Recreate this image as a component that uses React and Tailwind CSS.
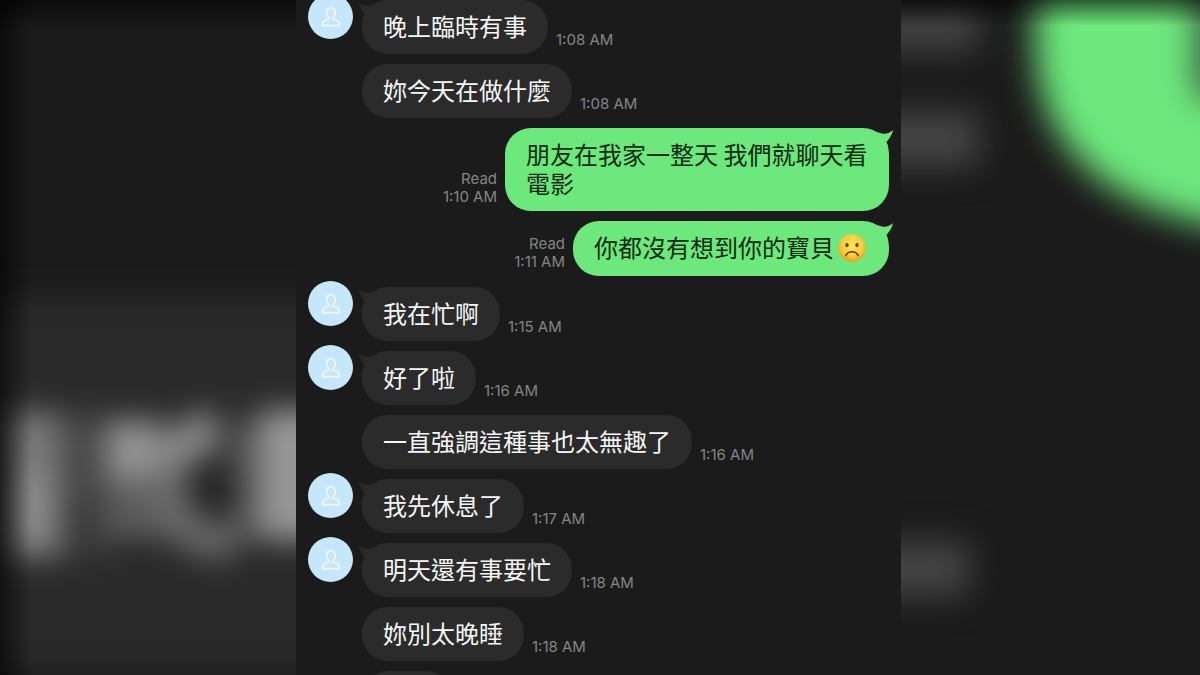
const messages = [
  { id: 1, from: 'them', text: '晚上臨時有事', time: '1:08 AM', first: true },
  { id: 2, from: 'them', text: '妳今天在做什麼', time: '1:08 AM' },
  { id: 3, from: 'me', text: '朋友在我家一整天 我們就聊天看電影', time: '1:10 AM' },
  { id: 4, from: 'me', text: '你都沒有想到你的寶貝', time: '1:11 AM', sad: true },
  { id: 5, from: 'them', text: '我在忙啊', time: '1:15 AM', first: true, afterMine: true },
  { id: 6, from: 'them', text: '好了啦', time: '1:16 AM', first: true },
  { id: 7, from: 'them', text: '一直強調這種事也太無趣了', time: '1:16 AM' },
  { id: 8, from: 'them', text: '我先休息了', time: '1:17 AM', first: true },
  { id: 9, from: 'them', text: '明天還有事要忙', time: '1:18 AM', first: true },
  { id: 10, from: 'them', text: '妳別太晚睡', time: '1:18 AM' },
];

function Avatar() {
  return (
    <div className="-mt-1.5 flex size-[45px] items-center justify-center rounded-full bg-[#c6e7fb]">
      <svg viewBox="0 0 20 20" className="size-5" fill="none" stroke="#f1f8f6" strokeWidth="1.7" strokeLinejoin="round" aria-hidden="true">
        <path d="M10 1C7.3 1 5.7 3 5.7 5.6c0 2.2.9 3.8 2 4.8.5.5.4 1.3-.3 1.7l-3.9 1.8C2.2 14.6 1.4 15.8 1.4 17v.8c0 .5.4.9.9.9h15.4c.5 0 .9-.4.9-.9V17c0-1.2-.8-2.4-2.1-3.1l-3.9-1.8c-.7-.4-.8-1.2-.3-1.7 1.1-1 2-2.6 2-4.8C14.3 3 12.7 1 10 1z" />
      </svg>
    </div>
  );
}

function SadFace() {
  return (
    <svg viewBox="0 0 28 28" className="mr-0.5 ml-1 inline-block size-7 align-[-5px]" role="img" aria-label="☹️">
      <defs>
        <radialGradient id="face" cx="50%" cy="42%" r="56%">
          <stop offset="0" stopColor="#ffe458" />
          <stop offset="0.65" stopColor="#fdcf3f" />
          <stop offset="1" stopColor="#f3a124" />
        </radialGradient>
      </defs>
      <circle cx="14" cy="14" r="13.7" fill="url(#face)" />
      <ellipse cx="9" cy="11.2" rx="1.6" ry="2.1" fill="#6b3d0c" />
      <ellipse cx="19" cy="11.2" rx="1.6" ry="2.1" fill="#6b3d0c" />
      <path d="M7.8 21.6c1.3-2.5 3.5-3.8 6.2-3.8s4.9 1.3 6.2 3.8" fill="none" stroke="#6b3d0c" strokeWidth="1.5" strokeLinecap="round" />
    </svg>
  );
}

function IncomingMessage({ message }) {
  return (
    <li className={`flex items-start ${message.afterMine ? 'mt-px' : ''}`}>
      <div className="h-0 w-[54px] shrink-0">{message.first && <Avatar />}</div>
      <div className="flex items-end gap-2">
        <div className="relative rounded-[26px] bg-[#2b2b2b] px-[21px] pt-[11px] pb-3.5 text-2xl leading-[29px] text-[#f7f7f7]">
          {message.first && (
            <svg viewBox="0 0 24 24" className="absolute top-0 -left-1 size-6" fill="#2b2b2b" aria-hidden="true">
              <path d="M0 2c3 3 7 4.500 11 3.500L20 3v17H5c0-2 .5-4 1.500-6C4.500 10 2 7 0 2z" />
            </svg>
          )}
          <p className="relative">{message.text}</p>
        </div>
        <Stamp time={message.time} />
      </div>
    </li>
  );
}

function OutgoingMessage({ message }) {
  return (
    <li className="flex items-end justify-end gap-2">
      <Stamp time={message.time} read />
      <div className="relative max-w-96 rounded-[26px] bg-[#6de87d] px-[21px] pt-[11px] pb-3.5 text-2xl leading-[29px] text-[#0b2a10]">
        <svg viewBox="0 0 24 24" className="absolute top-0 -right-1 size-6" fill="#6de87d" aria-hidden="true">
          <path d="M24 2c-3 3-7 4.500-11 3.500L4 3v17h15c0-2-.5-4-1.500-6C20.500 10 23 7 24 2z" />
        </svg>
        <p className="relative">
          {message.text}
          {message.sad && <SadFace />}
        </p>
      </div>
    </li>
  );
}

function Stamp({ time, read }) {
  return (
    <div className="shrink-0 pb-[5px] text-right font-['Inter','Liberation_Sans',sans-serif] text-[15px] leading-[18px] text-[#858585]">
      {read && <p>Read</p>}
      <time>{time}</time>
    </div>
  );
}

function LeftBackdrop() {
  return (
    <svg viewBox="0 0 296 675" preserveAspectRatio="none" className="h-full w-full" aria-hidden="true">
      <defs>
        <filter id="soft-l" x="-30%" y="-30%" width="160%" height="160%" colorInterpolationFilters="sRGB">
          <feGaussianBlur stdDeviation="15" />
        </filter>
        <linearGradient id="edge-left">
          <stop offset="0" stopColor="#000" stopOpacity="0.6" />
          <stop offset="1" stopColor="#000" stopOpacity="0" />
        </linearGradient>
        <linearGradient id="edge-top" x1="0" y1="0" x2="0" y2="1">
          <stop offset="0" stopColor="#000" stopOpacity="0.6" />
          <stop offset="1" stopColor="#000" stopOpacity="0" />
        </linearGradient>
      </defs>
      <rect width="296" height="675" fill="#1b1b1b" />
      <g filter="url(#soft-l)">
        <rect x="-60" y="298" width="420" height="372" fill="#2a2a2a" />
        <rect x="2" y="412" width="62" height="146" fill="#787878" />
        <rect x="16" y="472" width="34" height="66" fill="#8c8c8c" />
        <rect x="60" y="414" width="44" height="90" fill="#484848" />
        <rect x="76" y="500" width="34" height="56" fill="#3e3e3e" />
        <rect x="106" y="420" width="54" height="64" fill="#949494" />
        <rect x="106" y="480" width="76" height="58" fill="#5c5c5c" />
        <path d="M146 462C175 458 184 436 218 428" fill="none" stroke="#8a8a8a" strokeWidth="40" />
        <path d="M168 470C168 520 184 542 234 542" fill="none" stroke="#6a6a6a" strokeWidth="36" />
        <path d="M246 420V540" fill="none" stroke="#5e5e5e" strokeWidth="24" />
        <ellipse cx="219" cy="492" rx="19" ry="24" fill="#222" />
        <rect x="260" y="410" width="100" height="130" fill="#979797" />
      </g>
      <rect width="32" height="675" fill="url(#edge-left)" />
      <rect width="296" height="30" fill="url(#edge-top)" />
    </svg>
  );
}

function RightBackdrop() {
  return (
    <svg viewBox="0 0 299 675" preserveAspectRatio="none" className="h-full w-full" aria-hidden="true">
      <defs>
        <filter id="soft-r" x="-30%" y="-30%" width="160%" height="160%" colorInterpolationFilters="sRGB">
          <feGaussianBlur stdDeviation="17" />
        </filter>
      </defs>
      <rect width="299" height="675" fill="#1b1b1b" />
      <g filter="url(#soft-r)">
        <rect x="-80" y="6" width="158" height="44" fill="#464646" />
        <rect x="-80" y="112" width="158" height="54" fill="#464646" />
        <rect x="-80" y="542" width="148" height="54" fill="#464646" />
        <path d="M134 -60V46C138 150 206 226 400 236V-60Z" fill="#6de87d" />
        <rect x="294" y="-40" width="90" height="138" fill="#3c5a41" />
      </g>
      <rect width="299" height="26" fill="url(#edge-top)" />
    </svg>
  );
}

export default function App() {
  return (
    <div className="grid h-screen grid-cols-[296fr_605fr_299fr] overflow-hidden bg-[#1b1b1b] font-['Noto_Sans_CJK_TC',sans-serif]">
      <div className="min-h-0">
        <LeftBackdrop />
      </div>

      <main className="min-h-0 overflow-hidden bg-[#1b1b1b] px-3">
        <ul className="flex flex-col gap-2.5">
          {messages.map((message) =>
            message.from === 'me' ? (
              <OutgoingMessage key={message.id} message={message} />
            ) : (
              <IncomingMessage key={message.id} message={message} />
            )
          )}
          {/* Next bubble, cut off by the bottom of the screen */}
          <li className="flex pl-[54px]">
            <div className="h-[54px] w-[90px] rounded-[26px] bg-[#2b2b2b]" />
          </li>
        </ul>
      </main>

      <div className="min-h-0">
        <RightBackdrop />
      </div>
    </div>
  );
}
